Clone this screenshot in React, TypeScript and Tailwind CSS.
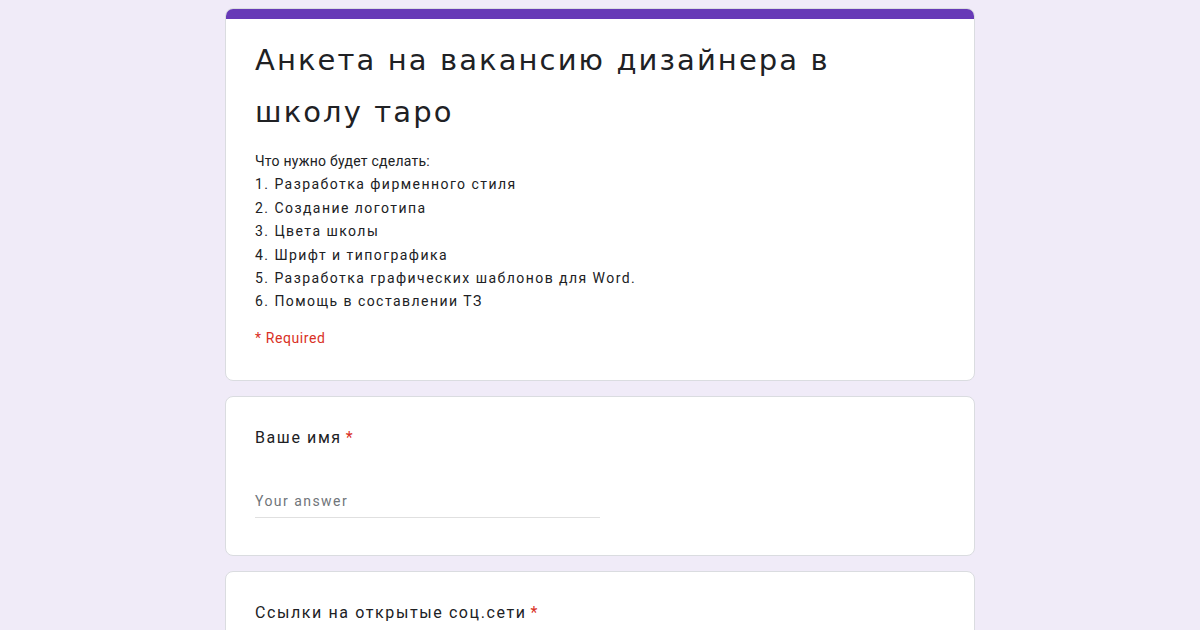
import React from 'react'

const items = [
  '1. Разработка фирменного стиля',
  '2. Создание логотипа',
  '3. Цвета школы',
  '4. Шрифт и типографика',
  '5. Разработка графических шаблонов для Word.',
  '6. Помощь в составлении ТЗ',
]

function Question({ label, children }: { label: string; children?: React.ReactNode }) {
  return (
    <div className="bg-white rounded-lg border border-[#dadce0] px-[29px] pt-[29px] pb-[37px]">
      <div className="text-[16px] leading-[24px] text-[#202124] tracking-[1.6px]">
        {label}
        <span className="text-[#d93025] ml-[4px]">*</span>
      </div>
      {children}
    </div>
  )
}

export default function App() {
  return (
    <div
      className="h-[630px] overflow-hidden bg-[#f0ebf8] pt-[8px]"
      style={{ fontFamily: 'Roboto, "Liberation Sans", sans-serif' }}
    >
      <div className="w-[750px] mx-auto flex flex-col gap-[15px]">
        <div className="bg-white rounded-lg border border-[#dadce0] overflow-hidden">
          <div className="h-[10px] bg-[#673ab7]" />
          <div className="px-[29px] pt-[15px] pb-[30px]">
            <h1
              className="text-[29px] leading-[52px] text-[#202124] font-normal tracking-[2.1px] max-w-[640px]"
              style={{ fontFamily: '"DejaVu Sans", Inter, sans-serif' }}
            >
              Анкета на вакансию дизайнера в школу таро
            </h1>
            <div className="mt-[12px] text-[14px] leading-[23.4px] text-[#202124]">
              <div className="tracking-[0.25px]">Что нужно будет сделать:</div>
              {items.map((t) => (
                <div key={t} className="tracking-[1.45px]">
                  {t}
                </div>
              ))}
            </div>
            <div className="mt-[13px] text-[14px] leading-[23px] text-[#d93025] tracking-[0.6px]">* Required</div>
          </div>
        </div>

        <Question label="Ваше имя">
          <div className="mt-[41px] w-[345px] border-b border-[#e0e0e0] pb-[6px] text-[14px] leading-[20px] text-[#70757a] tracking-[1.45px]">
            Your answer
          </div>
        </Question>

        <Question label="Ссылки на открытые соц.сети" />
      </div>
    </div>
  )
}
